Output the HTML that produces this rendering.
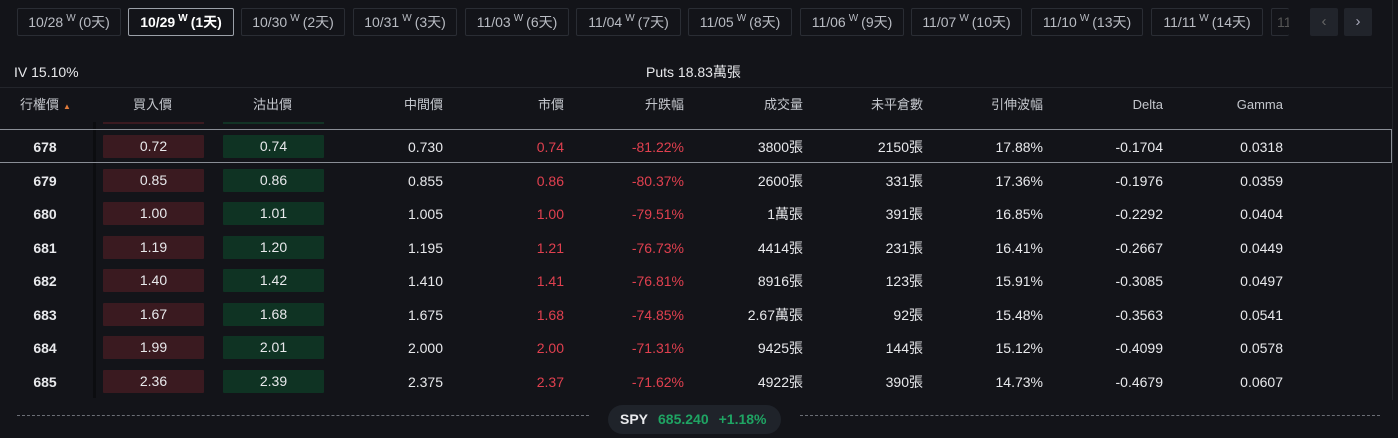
<!DOCTYPE html>
<html><head><meta charset="utf-8"><style>
body{margin:0;width:1398px;height:438px;background:#131419;font-family:"Liberation Sans","Noto Sans CJK TC",sans-serif;color:#e8e9ec;overflow:hidden;position:relative;font-size:14px}
.a{position:absolute;line-height:16px}
.c{line-height:0}
.tab{position:absolute;top:8px;height:28px;border:1px solid #2a2d34;border-radius:2px;box-sizing:border-box;color:#b9bcc3;font-size:14px;line-height:27px;text-align:center;white-space:nowrap;overflow:hidden}
.tab sup{font-size:10px;vertical-align:0;position:relative;top:-6px;margin:0 3px;line-height:0}
.tab.on{border-color:#9ba0a8;color:#fff;font-weight:bold}
.nav{position:absolute;top:8px;width:28px;height:28px;background:#21242b;border-radius:2px;color:#aab;text-align:center;line-height:27px;font-size:15px}
.h{position:absolute;top:97px;color:#c4c7cd;font-size:13px;line-height:16px}
.r{position:absolute;text-align:right;width:120px}
.box{position:absolute;width:101px;height:23px;text-align:center;line-height:23px;border-radius:1px}
</style></head><body>
<div class="tab" style="left:17px;width:104px">10/28<sup>W</sup>(0<span class="c">天</span>)</div>
<div class="tab on" style="left:128px;width:106px">10/29<sup>W</sup>(1<span class="c">天</span>)</div>
<div class="tab" style="left:241px;width:104px">10/30<sup>W</sup>(2<span class="c">天</span>)</div>
<div class="tab" style="left:353px;width:104px">10/31<sup>W</sup>(3<span class="c">天</span>)</div>
<div class="tab" style="left:465px;width:104px">11/03<sup>W</sup>(6<span class="c">天</span>)</div>
<div class="tab" style="left:576px;width:105px">11/04<sup>W</sup>(7<span class="c">天</span>)</div>
<div class="tab" style="left:688px;width:104px">11/05<sup>W</sup>(8<span class="c">天</span>)</div>
<div class="tab" style="left:800px;width:104px">11/06<sup>W</sup>(9<span class="c">天</span>)</div>
<div class="tab" style="left:911px;width:111px">11/07<sup>W</sup>(10<span class="c">天</span>)</div>
<div class="tab" style="left:1031px;width:112px">11/10<sup>W</sup>(13<span class="c">天</span>)</div>
<div class="tab" style="left:1151px;width:112px">11/11<sup>W</sup>(14<span class="c">天</span>)</div>
<div class="tab" style="left:1271px;width:18px;border-right:none;color:#555;text-align:left;padding-left:5px">11</div>
<div class="nav" style="left:1310px;color:#666">&#8249;</div>
<div class="nav" style="left:1344px">&#8250;</div>
<div class="a" style="left:14px;top:64px">IV 15.10%</div>
<div class="a" style="left:646px;top:64px">Puts 18.83<span class="c">萬張</span></div>
<div class="a" style="left:0;top:87px;width:1392px;height:1px;background:#23252b"></div>
<div class="a" style="left:1392px;top:0;width:1px;height:400px;background:#23252b"></div>
<div class="h" style="left:20px"><span class="c">行權價</span><span style="font-size:8px;color:#e07a3a;margin-left:4px">▲</span></div>
<div class="h" style="left:133px"><span class="c">買入價</span></div>
<div class="h" style="left:253px"><span class="c">沽出價</span></div>
<div class="h r" style="left:323px"><span class="c">中間價</span></div>
<div class="h r" style="left:444px"><span class="c">市價</span></div>
<div class="h r" style="left:564px"><span class="c">升跌幅</span></div>
<div class="h r" style="left:683px"><span class="c">成交量</span></div>
<div class="h r" style="left:803px"><span class="c">未平倉數</span></div>
<div class="h r" style="left:923px"><span class="c">引伸波幅</span></div>
<div class="h r" style="left:1043px">Delta</div>
<div class="h r" style="left:1163px">Gamma</div>
<div class="a" style="left:103px;top:122px;width:101px;height:2px;background:#3a1a20"></div>
<div class="a" style="left:223px;top:122px;width:101px;height:2px;background:#123325"></div>
<div class="a" style="left:93px;top:122px;width:3px;height:276px;background:#0c0d10"></div>
<div class="a" style="left:0;top:129px;width:1391px;height:32px;border:1px solid #8a8e96;border-left:none"></div>
<div id="rows"></div>
<div class="a" style="left:17px;top:415px;width:572px;border-top:1px dashed #6b6e75"></div>
<div class="a" style="left:800px;top:415px;width:580px;border-top:1px dashed #6b6e75"></div>
<div class="a" style="left:608px;top:405px;width:173px;height:29px;background:#1f232a;border-radius:15px;line-height:29px;font-size:14px;font-weight:bold"><span style="margin-left:12px;color:#e8e9ec">SPY</span><span style="margin-left:10px;color:#1fa463">685.240</span><span style="margin-left:10px;color:#1fa463">+1.18%</span></div>
<script>
var d=[["678","0.72","0.74","0.730","0.74","-81.22%","3800張","2150張","17.88%","-0.1704","0.0318"],
["679","0.85","0.86","0.855","0.86","-80.37%","2600張","331張","17.36%","-0.1976","0.0359"],
["680","1.00","1.01","1.005","1.00","-79.51%","1萬張","391張","16.85%","-0.2292","0.0404"],
["681","1.19","1.20","1.195","1.21","-76.73%","4414張","231張","16.41%","-0.2667","0.0449"],
["682","1.40","1.42","1.410","1.41","-76.81%","8916張","123張","15.91%","-0.3085","0.0497"],
["683","1.67","1.68","1.675","1.68","-74.85%","2.67萬張","92張","15.48%","-0.3563","0.0541"],
["684","1.99","2.01","2.000","2.00","-71.31%","9425張","144張","15.12%","-0.4099","0.0578"],
["685","2.36","2.39","2.375","2.37","-71.62%","4922張","390張","14.73%","-0.4679","0.0607"]];
function w(s){return s.replace(/([萬張]+)/,'<span class="c">$1</span>');}
var h="";d.forEach(function(r,i){var y=Math.round(138+i*33.5);
h+='<div class="a" style="left:25px;top:'+(y+1)+'px;width:40px;text-align:center;font-weight:bold">'+r[0]+'</div>';
h+='<div class="box" style="left:103px;top:'+(y-3)+'px;background:#3a1a20">'+r[1]+'</div>';
h+='<div class="box" style="left:223px;top:'+(y-3)+'px;background:#0f3323">'+r[2]+'</div>';
var rs=[443,564,684,803,923,1043,1163,1283];
for(var j=3;j<11;j++){var c=(j==4||j==5)?'color:#e0404f;':'';h+='<div class="a r" style="left:'+(rs[j-3]-120)+'px;top:'+(y+1)+'px;'+c+'">'+w(r[j])+'</div>';}
});document.getElementById('rows').innerHTML=h;
</script>
</body></html>
